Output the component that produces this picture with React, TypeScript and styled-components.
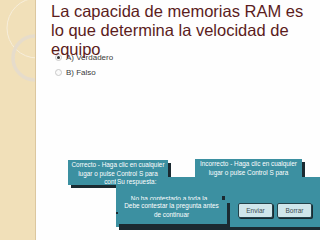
import React from 'react'
import styled, { createGlobalStyle } from 'styled-components'

const GlobalStyle = createGlobalStyle`
    html, body {
        margin: 0;
        padding: 0;
        background: #ffffff;
    }
    body {
        font-family: "Liberation Sans", Arial, sans-serif;
    }
`

const Slide = styled.div`
    position: relative;
    display: flex;
    width: 320px;
    height: 240px;
    overflow: hidden;
    background: #fefefe;
`

const Strip = styled.div`
    flex: 0 0 35px;
    height: 100%;
    background: #f1e0b9;
    border-right: 1px solid #dcc79f;
    overflow: hidden;
    svg {
        display: block;
    }
`

const Content = styled.div`
    display: flex;
    flex-direction: column;
    padding: 2px 0 0 15px;
`

const Title = styled.h1`
    margin: 0;
    height: 51px;
    font-size: 16.5px;
    line-height: 19px;
    font-weight: 400;
    color: #5b1c1c;
    white-space: nowrap;
    position: relative;
    z-index: 2;
`

const Options = styled.div`
    display: flex;
    flex-direction: column;
    gap: 6px;
    padding-left: 4px;
    position: relative;
    z-index: 1;
`

const Option = styled.label`
    display: flex;
    align-items: center;
    gap: 4px;
    font-size: 8px;
    line-height: 9px;
    color: #3a3a3a;
`

const Radio = styled.span<{ $checked?: boolean }>`
    width: 5px;
    height: 5px;
    border-radius: 50%;
    border: 1px solid #c9c9c9;
    background: #fafafa;
    display: flex;
    align-items: center;
    justify-content: center;
    &::after {
        content: '';
        width: 3px;
        height: 3px;
        border-radius: 50%;
        background: ${({ $checked }) => ($checked ? '#333' : 'transparent')};
    }
`

const Layer = styled.div<{ $x: number; $y: number; $w: number; $h: number; $z?: number }>`
    position: absolute;
    left: ${({ $x }) => $x}px;
    top: ${({ $y }) => $y}px;
    width: ${({ $w }) => $w}px;
    height: ${({ $h }) => $h}px;
    z-index: ${({ $z }) => $z ?? 3};
    background: #3c90a1;
    box-shadow: 3px 3px 0 #1b2a31;
    color: #ffffff;
    font-size: 6.4px;
    line-height: 8.5px;
    text-align: center;
    white-space: nowrap;
    overflow: hidden;
    box-sizing: border-box;
    padding-top: 1px;
`

const AnswerPanel = styled(Layer)`
    text-align: left;
    padding-left: 1px;
    display: flex;
    flex-direction: column;
    overflow: visible;
`

const NoticeLayer = styled(Layer)`
    padding-top: 2px;
`

const PanelLabel = styled.div`
    padding-top: 0;
`

const ButtonRow = styled.div`
    position: absolute;
    left: 122px;
    top: 26px;
    display: flex;
    gap: 4px;
`

const Button = styled.button`
    width: 35px;
    height: 15px;
    padding: 0;
    background: #cfe6eb;
    border: 1px solid #23424a;
    border-radius: 2px;
    box-shadow: 1px 1px 0 #1b2a31;
    font-family: "Liberation Sans", Arial, sans-serif;
    font-size: 6.5px;
    color: #3d4b50;
`

const Tick = styled.span`
    position: absolute;
    left: 116px;
    top: 212px;
    width: 2px;
    height: 2px;
    background: #1b2a31;
    z-index: 7;
`

export default function App() {
    return (
        <>
            <GlobalStyle />
            <Slide>
                <Strip>
                    <svg width="35" height="240" viewBox="0 0 35 240">
                        <circle cx="37" cy="28" r="30" fill="none" stroke="#f7eedb" strokeWidth="1" />
                        <circle cx="35" cy="58" r="22" fill="none" stroke="#e6dccb" strokeWidth="3.5" />
                    </svg>
                </Strip>
                <Content>
                    <Title>
                        La capacida de memorias RAM es
                        <br />
                        lo que determina la velocidad de
                        <br />
                        equipo
                    </Title>
                    <Options>
                        <Option>
                            <Radio $checked />A) Verdadero
                        </Option>
                        <Option>
                            <Radio />B) Falso
                        </Option>
                    </Options>
                </Content>

                <Layer $x={68} $y={160} $w={100} $h={25}>
                    Correcto - Haga clic en cualquier
                    <br />
                    lugar o pulse Control S para
                    <br />
                    continuar.
                </Layer>
                <Layer $x={195} $y={159} $w={107} $h={25}>
                    Incorrecto - Haga clic en cualquier
                    <br />
                    lugar o pulse Control S para
                    <br />
                    continuar.
                </Layer>
                <AnswerPanel $x={116} $y={177} $w={210} $h={50} $z={4}>
                    <PanelLabel>Su respuesta:</PanelLabel>
                    <ButtonRow>
                        <Button>Enviar</Button>
                        <Button>Borrar</Button>
                    </ButtonRow>
                </AnswerPanel>
                <NoticeLayer $x={116} $y={193} $w={106} $h={12} $z={5}>
                    No ha contestado a toda la
                </NoticeLayer>
                <NoticeLayer $x={116} $y={200} $w={111} $h={24} $z={6}>
                    Debe contestar la pregunta antes
                    <br />
                    de continuar
                </NoticeLayer>
                <Tick />
            </Slide>
        </>
    )
}
